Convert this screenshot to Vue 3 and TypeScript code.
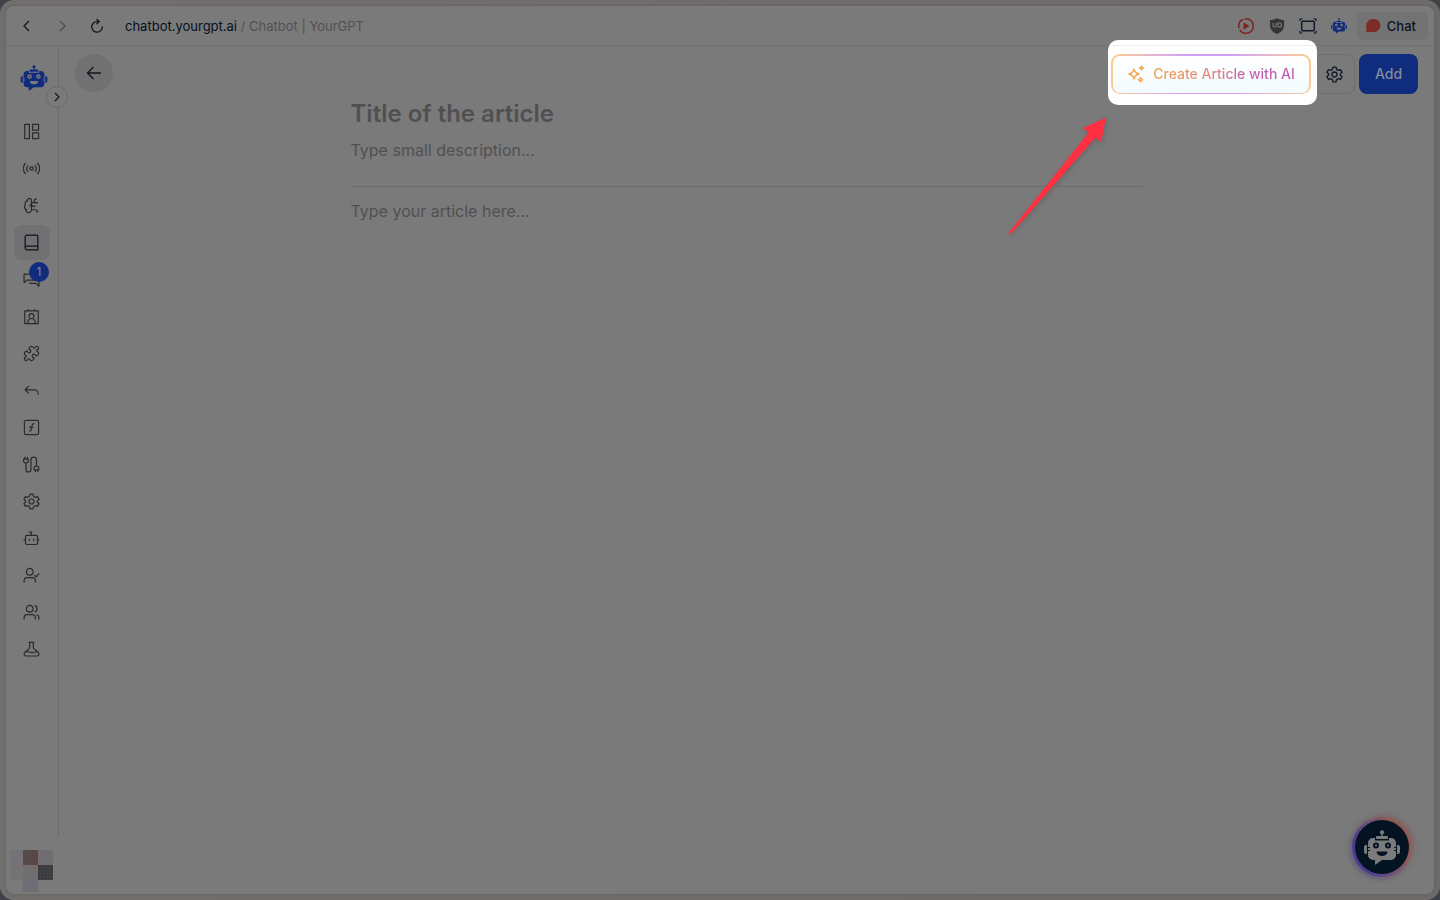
<script setup lang="ts">
import { ref } from 'vue'

interface NavItem {
  label: string
  paths: string[]
  badge?: number
}

const navItems: NavItem[] = [
  { label: 'Dashboard', paths: ['M2.5 1.8h6.500v20.400H2.500z', 'M13.500 1.800h8.500v8.200h-8.500z', 'M13.500 14h8.500v8.200h-8.500z'] },
  {
    label: 'Live',
    paths: [
      'M12 9.6a2.4 2.4 0 1 0 0 4.8 2.4 2.4 0 0 0 0-4.8z',
      'M7.2 7.2a6.800 6.800 0 0 0 0 9.600M16.800 7.200a6.800 6.800 0 0 1 0 9.600',
      'M3.6 4.200a11.400 11.400 0 0 0 0 15.600M20.400 4.200a11.400 11.400 0 0 1 0 15.600',
    ],
  },
  {
    label: 'Training',
    paths: [
      'M12 5a3 3 0 1 0-5.997.125 4 4 0 0 0-2.526 5.770 4 4 0 0 0 .556 6.588A4 4 0 1 0 12 18z',
      'M9 13a4.500 4.500 0 0 0 3-4M6.003 5.125A3 3 0 0 0 6.401 6.500M6 18a4 4 0 0 1-1.967-.516',
      'M12 13h4M12 18h6a2 2 0 0 1 2 2v1M12 8h8M16 8V5a2 2 0 0 1 2-2',
      'M16 12.500a.5.5 0 1 0 .01 0M18 2.500a.5.5 0 1 0 .01 0M20 20.500a.5.5 0 1 0 .01 0M20 7.500a.5.5 0 1 0 .01 0',
    ],
  },
  { label: 'Articles', paths: ['M3 19.500v-15a3 3 0 0 1 3-3h13a2 2 0 0 1 2 2v19H6a3 3 0 0 1-3-3zM3 19.500a3 3 0 0 1 3-2.500h15'] },
  {
    label: 'Conversations',
    badge: 1,
    paths: ['M1.500 16.500V4.500h14v8.500h-10z', 'M10 16v1.500h8.500l4 4V9H19'],
  },
  {
    label: 'Contacts',
    paths: [
      'M2.500 4h19v18h-19z',
      'M7.500 1.500V4M16.500 1.500V4',
      'M12 8a3.500 3.500 0 1 0 0 7 3.500 3.500 0 0 0 0-7z',
      'M6.800 21.500v-2a4 4 0 0 1 3-3.900M17.200 21.500v-2a4 4 0 0 0-3-3.900',
    ],
  },
  {
    label: 'Integrations',
    paths: [
      'M15.390 4.390a1 1 0 0 0 1.680-.474 2.500 2.500 0 1 1 3.014 3.015 1 1 0 0 0-.474 1.680l1.683 1.682a2.414 2.414 0 0 1 0 3.414L19.610 15.390a1 1 0 0 1-1.680-.474 2.500 2.500 0 1 0-3.014 3.015 1 1 0 0 1 .474 1.680l-1.683 1.682a2.414 2.414 0 0 1-3.414 0L8.610 19.610a1 1 0 0 0-1.680.474 2.500 2.500 0 1 1-3.014-3.015 1 1 0 0 0 .474-1.680l-1.683-1.682a2.414 2.414 0 0 1 0-3.414L4.390 8.610a1 1 0 0 1 1.680.474 2.500 2.500 0 1 0 3.014-3.015 1 1 0 0 1-.474-1.680l1.683-1.682a2.414 2.414 0 0 1 3.414 0z',
    ],
  },
  { label: 'Replies', paths: ['M8 6 3 11l5 5', 'M3 11h13a5.500 5.500 0 0 1 5.500 5.500V18'] },
  {
    label: 'Functions',
    paths: [
      'M4 1.800h16a2 2 0 0 1 2 2v16.400a2 2 0 0 1-2 2H4a2 2 0 0 1-2-2V3.800a2 2 0 0 1 2-2z',
      'M9 17.200c2 0 2.700-1 3-4.200l.6-3.200c.4-2.600 1.200-3.500 3.200-3.200M8.500 11.500h6',
    ],
  },
  {
    label: 'Connections',
    paths: [
      'M2.500 1v3M6 1v3M.8 4.500h6.800v2a3.400 3.400 0 0 1-6.800 0z',
      'M4.200 10v9a3.500 3.500 0 0 0 7 0V5.500a3.900 3.900 0 0 1 7.800 0V14',
      'M15.600 19.500v-2a3.400 3.400 0 0 1 6.800 0v2zM17.300 20v2.500M20.800 20v2.500',
    ],
  },
  {
    label: 'Settings',
    paths: [
      'M12 8.500a3.500 3.500 0 1 0 0 7 3.500 3.500 0 0 0 0-7z',
      'M9.800 1.500h4.400l.8 3.300 2.200 1.300 3.300-1 2.200 3.900-2.500 2.300v1.400l2.500 2.300-2.200 3.900-3.300-1-2.200 1.300-.8 3.300H9.800L9 19.200l-2.200-1.300-3.300 1L1.300 15l2.500-2.300v-1.400L1.300 9l2.200-3.900 3.300 1L9 4.800z',
    ],
  },
  {
    label: 'Chatbot',
    paths: ['M5.500 7.500h13a2 2 0 0 1 2 2v9a2 2 0 0 1-2 2h-13a2 2 0 0 1-2-2v-9a2 2 0 0 1 2-2z', 'M12 7.500V3H8', 'M.8 14h2.700M20.500 14h2.700', 'M9 12.500v3M15 12.500v3'],
  },
  {
    label: 'Assignments',
    paths: ['M9.500 2a4.700 4.700 0 1 0 0 9.400 4.700 4.700 0 0 0 0-9.400z', 'M1.500 22v-2.500a4.500 4.500 0 0 1 4.500-4.500h7a4.500 4.500 0 0 1 4.500 4.500V22', 'M16 11.500l2.500 2.500 4.500-5'],
  },
  {
    label: 'Team',
    paths: ['M9.500 2a4.700 4.700 0 1 0 0 9.400 4.700 4.700 0 0 0 0-9.400z', 'M1.500 22v-2.500a4.500 4.500 0 0 1 4.500-4.500h7a4.500 4.500 0 0 1 4.500 4.500V22', 'M16.500 2.200a4.700 4.700 0 0 1 0 9M22.500 22v-2.500a4.500 4.500 0 0 0-3.400-4.300'],
  },
  {
    label: 'Experiments',
    paths: ['M8 1.800h8M9.500 2v6.500c0 2-1.200 3-3 4.300L2.500 16c-2 2-.8 5.200 2 5.200h15c2.800 0 4-3.200 2-5.200l-4-3.200c-1.800-1.300-3-2.300-3-4.300V2', 'M4 15.500c3-1.500 5 .5 8 .8s5-1 7.500-.8'],
  },
]

const gear = navItems[10].paths
const activeLabel = ref('Articles')
const title = ref('')
const description = ref('')
const body = ref('')
const tiles = ['a', 'b', 'c', 'd', 'e', 'f', 'none', 'g', 'none']
</script>

<template>
  <div class="desktop">
    <svg class="defs" aria-hidden="true">
      <symbol id="bot" viewBox="0 0 36 35">
        <g fill="currentColor">
          <circle cx="18" cy="2.300" r="2.100" />
          <path d="M17.300 4h1.400v3h-1.400z" />
          <rect x="12" y="6" width="12" height="3" rx="1" />
          <path d="M9 8h2v2.500h14V8h2a5 5 0 0 1 5 5v12a5 5 0 0 1-5 5h-9l-7 5v-5H9a5 5 0 0 1-5-5V13a5 5 0 0 1 5-5z" />
          <path d="M3 15v9H2a2 2 0 0 1-2-2v-5a2 2 0 0 1 2-2zM33 15v9h1a2 2 0 0 0 2-2v-5a2 2 0 0 0-2-2z" />
        </g>
        <g class="bot-face">
          <circle cx="12" cy="15.500" r="3" />
          <circle cx="24" cy="15.500" r="3" />
          <path d="M12.500 21.500h11a5.500 4.500 0 0 1-11 0z" />
          <path d="M3 17h3v1H3zM3 20h3v1H3zM30 17h3v1h-3zM30 20h3v1h-3z" />
        </g>
        <circle cx="12" cy="15.500" r="1" fill="currentColor" />
        <circle cx="24" cy="15.500" r="1" fill="currentColor" />
      </symbol>
    </svg>

    <div class="window">
      <header class="chrome">
        <button class="nav-btn" aria-label="Go back">
          <svg width="14" height="14" viewBox="0 0 14 14"><path d="M9 2 4 7l5 5" /></svg>
        </button>
        <button class="nav-btn dim" aria-label="Go forward">
          <svg width="14" height="14" viewBox="0 0 14 14"><path d="m5 2 5 5-5 5" /></svg>
        </button>
        <button class="nav-btn" aria-label="Reload">
          <svg width="14" height="14" viewBox="0 0 14 14"><path d="M12.300 7.500A5.300 5.300 0 1 1 7 2.600h1.500M6.500 0l2.700 2.600-2.700 2.700" /></svg>
        </button>
        <p class="address"><span class="host">chatbot.yourgpt.ai</span> <span>/</span> Chatbot | YourGPT</p>

        <div class="extensions">
          <button class="ext" aria-label="Record">
            <svg width="18" height="18" viewBox="0 0 18 18">
              <circle cx="9" cy="9" r="7.300" fill="none" stroke="#7c241e" stroke-width="1.500" stroke-dasharray="19 1.500 11 1.500 20" />
              <path d="M6.500 5.300v7.400l6-3.700z" fill="#7c241e" />
            </svg>
          </button>
          <button class="ext" aria-label="uBlock">
            <svg width="16" height="18" viewBox="0 0 16 18">
              <path d="M8 1c2 1.400 4.500 2 7 2v5c0 4.500-2.500 7-7 9-4.500-2-7-4.500-7-9V3c2.500 0 5-.6 7-2z" fill="#343537" />
              <path d="M4 6v2.500a1.500 1.500 0 0 0 3 0V6M9 6v4h1.500a2 2 0 0 0 0-4z" fill="none" stroke="#7c7c7c" stroke-width="1.100" />
            </svg>
          </button>
          <button class="ext" aria-label="Capture">
            <svg width="18" height="16" viewBox="0 0 18 16" fill="none" stroke="#101a28" stroke-width="1.500">
              <rect x="2.700" y="3.200" width="12.600" height="9.600" rx="1" />
              <path d="M1 3V1h2.500M14.500 1H17v2M1 13v2h2.500M14.500 15H17v-2" stroke-width="1.200" />
            </svg>
          </button>
          <button class="ext" aria-label="YourGPT">
            <svg class="bot-blue" width="16" height="16"><use href="#bot" /></svg>
          </button>
          <button class="chat">
            <svg width="16" height="14" viewBox="0 0 16 14"><path d="M8 0h1a6.500 6.500 0 0 1 0 13H2c-1 0-1.300-.8-.7-1.500.4-.5.500-1 .3-1.800A7 7 0 0 1 8 0z" fill="#7b2c26" /></svg>
            Chat
          </button>
        </div>
      </header>

      <div class="body">
        <aside class="sidebar">
          <div class="rail">
            <a class="brand" href="#" aria-label="YourGPT home">
              <svg class="bot-blue" width="28" height="26"><use href="#bot" /></svg>
            </a>
            <button class="expand" aria-label="Expand sidebar">
              <svg width="10" height="10" viewBox="0 0 10 10"><path d="m3 1 4 4-4 4" /></svg>
            </button>
            <nav class="menu" aria-label="Main">
              <button
                v-for="item in navItems"
                :key="item.label"
                class="menu-item"
                :class="{ active: item.label === activeLabel }"
                :aria-label="item.label"
                @click="activeLabel = item.label"
              >
                <svg width="17" height="17" viewBox="0 0 24 24">
                  <path v-for="d in item.paths" :key="d" :d="d" />
                </svg>
                <span v-if="item.badge" class="badge">{{ item.badge }}</span>
              </button>
            </nav>
          </div>
          <div class="account">
            <i v-for="(tile, i) in tiles" :key="i" :class="'tile-' + tile"></i>
          </div>
        </aside>

        <main class="content">
          <div class="toolbar">
            <button class="back" aria-label="Back to articles">
              <svg width="16" height="14" viewBox="0 0 16 14"><path d="M7.500 1 1.500 7l6 6M1.500 7H15" /></svg>
            </button>
            <div class="actions">
              <div class="highlight">
                <button class="ai-btn">
                  <svg width="18" height="18" viewBox="0 0 18 18">
                    <path d="M7 4c.6 3 1.800 4.200 5 5-3.200.8-4.400 2-5 5-.6-3-1.800-4.200-5-5 3.200-.8 4.400-2 5-5z" />
                    <path d="M14.500 1c.2 1.300.8 1.800 2 2-1.200.2-1.800.8-2 2-.2-1.200-.8-1.800-2-2 1.200-.2 1.800-.7 2-2zM13.500 12.500c.3 1.500.8 2 2.300 2.300-1.500.2-2 .8-2.300 2.200-.3-1.400-.8-2-2.300-2.200 1.500-.3 2-.8 2.300-2.300z" />
                  </svg>
                  <span>Create Article with AI</span>
                </button>
                <svg class="pointer" width="110" height="130" viewBox="0 0 110 130" aria-hidden="true">
                  <path d="M102 7.500 79 18l5.500 4.500L5 122.500q0 2 2 1.500L91.500 27.500l5.500 4.500z" fill="#ff3040" />
                </svg>
              </div>
              <button class="gear" aria-label="Article settings">
                <svg width="17" height="17" viewBox="0 0 24 24"><path v-for="d in gear" :key="d" :d="d" /></svg>
              </button>
              <button class="add">Add</button>
            </div>
          </div>

          <form class="editor" @submit.prevent>
            <input v-model="title" class="title" type="text" aria-label="Title" placeholder="Title of the article" />
            <input v-model="description" class="text" type="text" aria-label="Description" placeholder="Type small description..." />
            <hr />
            <textarea v-model="body" class="text article" aria-label="Article" placeholder="Type your article here..."></textarea>
          </form>
        </main>
      </div>

      <button class="launcher" aria-label="Open chat assistant">
        <span class="disc"><svg width="36" height="35"><use href="#bot" /></svg></span>
      </button>
    </div>
  </div>
</template>

<style>
body {
  margin: 0;
  background: #3f4146;
}
</style>

<style scoped>
* {
  box-sizing: border-box;
}
.desktop {
  height: 100vh;
  padding: 6px;
  border-radius: 14px;
  background: linear-gradient(90deg, #716e6d, #6d6a69);
  font-family: Inter, 'Liberation Sans', sans-serif;
  color: #0b1420;
}
.defs {
  position: absolute;
  width: 0;
  height: 0;
}
button {
  display: flex;
  align-items: center;
  justify-content: center;
  padding: 0;
  border: 0;
  background: none;
  font: inherit;
  color: inherit;
  cursor: pointer;
}
.window {
  position: relative;
  display: flex;
  flex-direction: column;
  height: 100%;
  border-radius: 8px;
  background: #7a7a7a;
  box-shadow: 0 0 3px #5f5d5d;
}
.chrome {
  display: flex;
  align-items: center;
  flex: none;
  height: 40px;
  padding: 0 6px 0 3px;
  border-bottom: 1px solid #707070;
}
.nav-btn {
  width: 35px;
  height: 30px;
}
.nav-btn svg,
.expand svg,
.back svg {
  fill: none;
  stroke: #101720;
  stroke-width: 1.300;
}
.nav-btn.dim svg {
  stroke: #4a4b4e;
}
.address {
  flex: 1;
  margin: 0 0 0 11px;
  font-size: 13px;
  line-height: 20px;
  color: #505155;
}
.host {
  color: #07101d;
}
.extensions {
  display: flex;
  align-items: center;
  gap: 1px;
}
.ext {
  width: 30px;
  height: 28px;
}
.chat {
  gap: 6px;
  height: 28px;
  margin-left: 2px;
  padding: 0 12px 0 8px;
  border-radius: 6px;
  background: #737373;
  font-size: 13px;
  font-weight: 500;
}
.bot-face {
  fill: var(--face, #7a7a7a);
}
.bot-blue {
  color: #102c7c;
}
.body {
  display: flex;
  flex: 1;
  min-height: 0;
}
.sidebar {
  display: flex;
  flex-direction: column;
  flex: none;
  width: 53px;
}
.rail {
  position: relative;
  flex: 1;
  padding-top: 19px;
  border-right: 1px solid #6a6a70;
}
.brand {
  display: block;
  height: 27px;
  margin-left: 14px;
}
.brand svg {
  display: block;
}
.expand {
  position: absolute;
  top: 40px;
  right: -10px;
  width: 22px;
  height: 22px;
  border: 1px solid #6a6a70;
  border-radius: 50%;
  background: #7a7a7a;
}
.menu {
  display: flex;
  flex-direction: column;
  gap: 2px;
  margin: 22px 8px 0;
}
.menu-item {
  position: relative;
  height: 35px;
  padding-right: 1px;
  border-radius: 8px;
}
.menu-item svg {
  fill: none;
  stroke: #292b30;
  stroke-width: 1.700;
  stroke-linejoin: round;
}
.menu-item.active {
  background: #717171;
}
.menu-item.active svg {
  stroke: #071426;
}
.badge {
  position: absolute;
  top: 0;
  right: 1px;
  width: 20px;
  border-radius: 10px;
  background: #102c7c;
  color: #858b9c;
  font-size: 12px;
  line-height: 20px;
}
.account {
  display: grid;
  grid-template: 15px 15px 12px / 13px 15px 15px;
  height: 58px;
  padding: 14px 0 0 4px;
}
.tile-a {
  background: #737378;
}
.tile-b {
  background: radial-gradient(circle, #763c3c 1px, #4d4d4d 1px) 0 0 / 4px 4px;
}
.tile-c {
  background: #706e70;
}
.tile-d {
  background: #747474;
}
.tile-e {
  background: #706e6e;
}
.tile-f {
  background: radial-gradient(circle, #303034 1px, #404044 1px) 0 0 / 3px 3px;
}
.tile-g {
  background: #6f6e76;
}
.content {
  flex: 1;
  min-width: 0;
}
.toolbar {
  display: flex;
  justify-content: space-between;
  height: 48px;
  padding: 8px 16px 0;
}
.back {
  width: 38px;
  height: 38px;
  border-radius: 50%;
  background: #717171;
}
.actions {
  display: flex;
  gap: 4px;
}
.highlight {
  position: relative;
  z-index: 2;
}
.highlight::before {
  content: '';
  position: absolute;
  inset: -14px -6px -11px -3px;
  border-radius: 10px;
  background: linear-gradient(#f6eaee, #f6eaee) 0 5px / 100% 1px no-repeat #fff;
}
.ai-btn {
  position: relative;
  gap: 8px;
  width: 200px;
  height: 40px;
  padding-bottom: 2px;
  border: 2px solid transparent;
  border-bottom-width: 1px;
  border-radius: 9px;
  background:
    linear-gradient(#fff, #f2fbff) padding-box,
    linear-gradient(90deg, #fccb91, #e5b7cb 20%, #d0a0f5 38%, #d0a0f5 60%, #e5b7cb 78%, #fccb91) border-box;
  font-size: 14px;
  font-weight: 500;
}
.ai-btn svg {
  fill: none;
  stroke: #f5a54d;
  stroke-width: 1.300;
  stroke-linejoin: round;
}
.ai-btn span {
  background: linear-gradient(90deg, #f5a54d, #df8585 45%, #c661ad 65%, #bf5cb5);
  background-clip: text;
  color: transparent;
  white-space: nowrap;
}
.pointer {
  position: absolute;
  top: 56px;
  left: -107px;
  filter: drop-shadow(1px 2px 2px #686868);
  pointer-events: none;
}
.gear {
  width: 40px;
  height: 40px;
  padding-right: 1px;
  border: 1px solid #6c6c72;
  border-radius: 8px;
}
.gear svg {
  fill: none;
  stroke: #111b29;
  stroke-width: 1.900;
  stroke-linejoin: round;
}
.add {
  width: 59px;
  height: 40px;
  padding-bottom: 2px;
  border-radius: 8px;
  background: #102c7c;
  color: #858b9c;
  font-size: 14px;
  font-weight: 500;
}
.editor {
  display: flex;
  flex-direction: column;
  max-width: 792px;
  margin: 0 auto;
}
.editor input,
.editor textarea {
  width: 100%;
  padding: 0;
  border: 0;
  outline: 0;
  background: none;
  font-family: inherit;
  color: #15181d;
}
.editor .title {
  height: 38px;
  margin-bottom: 2px;
  font-size: 24px;
  font-weight: 600;
}
.editor .text {
  height: 32px;
  font-size: 16px;
  line-height: 24px;
}
.editor ::placeholder {
  color: #505053;
  opacity: 1;
}
hr {
  width: 100%;
  margin: 20px 0 12px;
  border: 0;
  border-top: 1px solid #6a6a70;
}
.editor .article {
  display: block;
  height: 240px;
  resize: none;
}
.launcher {
  position: absolute;
  right: 22px;
  bottom: 17px;
  width: 60px;
  height: 60px;
  border-radius: 50%;
  background: linear-gradient(65deg, #4a3b91 20%, #715475 50%, #925a53 75%);
  box-shadow: 2px -2px 5px #7f6562, -2px 2px 5px #625d78;
}
.disc {
  display: flex;
  align-items: center;
  justify-content: center;
  width: 54px;
  height: 54px;
  border-radius: 50%;
  background: #041322;
  color: #7b7b7b;
  --face: #041322;
}
</style>
